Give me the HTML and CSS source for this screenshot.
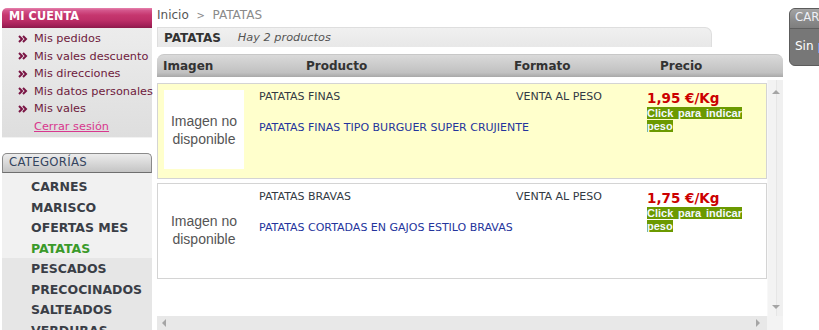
FILE: index.html
```html
<!DOCTYPE html>
<html lang="es">
<head>
<meta charset="utf-8">
<title>PATATAS</title>
<link rel="stylesheet" href="styles.css">
</head>
<body>
<div class="page">
  <aside class="sidebar">
    <section class="account">
      <h2 class="account-title">MI CUENTA</h2>
      <ul class="account-list">
        <li><svg class="chev" width="10" height="8" viewBox="0 0 10 8"><path d="M1 1 L4 4 L1 7 M5 1 L8 4 L5 7" fill="none" stroke="#7a1544" stroke-width="2"/></svg><a href="#">Mis pedidos</a></li>
        <li><svg class="chev" width="10" height="8" viewBox="0 0 10 8"><path d="M1 1 L4 4 L1 7 M5 1 L8 4 L5 7" fill="none" stroke="#7a1544" stroke-width="2"/></svg><a href="#">Mis vales descuento</a></li>
        <li><svg class="chev" width="10" height="8" viewBox="0 0 10 8"><path d="M1 1 L4 4 L1 7 M5 1 L8 4 L5 7" fill="none" stroke="#7a1544" stroke-width="2"/></svg><a href="#">Mis direcciones</a></li>
        <li><svg class="chev" width="10" height="8" viewBox="0 0 10 8"><path d="M1 1 L4 4 L1 7 M5 1 L8 4 L5 7" fill="none" stroke="#7a1544" stroke-width="2"/></svg><a href="#">Mis datos personales</a></li>
        <li><svg class="chev" width="10" height="8" viewBox="0 0 10 8"><path d="M1 1 L4 4 L1 7 M5 1 L8 4 L5 7" fill="none" stroke="#7a1544" stroke-width="2"/></svg><a href="#">Mis vales</a></li>
        <li class="logout-item"><a class="logout" href="#">Cerrar sesión</a></li>
      </ul>
    </section>
    <section class="cats">
      <h2 class="cats-title">CATEGORÍAS</h2>
      <ul class="cats-list">
        <li>CARNES</li>
        <li>MARISCO</li>
        <li>OFERTAS MES</li>
        <li class="active">PATATAS</li>
        <li>PESCADOS</li>
        <li>PRECOCINADOS</li>
        <li>SALTEADOS</li>
        <li>VERDURAS</li>
      </ul>
    </section>
  </aside>

  <main class="main">
    <div class="crumbs"><span class="crumb-home">Inicio</span>&nbsp; <span class="crumb-sep">&gt;</span>&nbsp; PATATAS</div>
    <div class="titlebar"><strong class="title-name">PATATAS</strong><em class="title-count">Hay 2 productos</em></div>
    <div class="thead">
      <span>Imagen</span><span>Producto</span><span>Formato</span><span>Precio</span>
    </div>
    <div class="scroller">
      <div class="scroll-body">
        <div class="rows">
          <div class="prod prod-hl">
            <div class="img-box">Imagen no disponible</div>
            <div class="prod-info">
              <div class="prod-name">PATATAS FINAS</div>
              <div class="prod-desc">PATATAS FINAS TIPO BURGUER SUPER CRUJIENTE</div>
            </div>
            <div class="prod-format">VENTA AL PESO</div>
            <div class="prod-price">
              <div class="price">1,95 €/Kg</div>
              <div class="weigh"><span>Click para indicar peso</span></div>
            </div>
          </div>
          <div class="prod">
            <div class="img-box">Imagen no disponible</div>
            <div class="prod-info">
              <div class="prod-name">PATATAS BRAVAS</div>
              <div class="prod-desc">PATATAS CORTADAS EN GAJOS ESTILO BRAVAS</div>
            </div>
            <div class="prod-format">VENTA AL PESO</div>
            <div class="prod-price">
              <div class="price">1,75 €/Kg</div>
              <div class="weigh"><span>Click para indicar peso</span></div>
            </div>
          </div>
        </div>
        <div class="vbar"><span class="arr arr-up"></span><span class="arr arr-down"></span></div>
      </div>
      <div class="hbar">
        <div class="htrack"><span class="arr arr-left"></span><span class="arr arr-right"></span></div>
        <div class="corner"></div>
      </div>
    </div>
  </main>

  <aside class="cart">
    <h2 class="cart-title">CARRITO</h2>
    <p class="cart-body">Sin <a href="#">productos</a></p>
  </aside>
</div>
</body>
</html>
```

FILE: styles.css
```css
html, body {
  margin: 0;
  padding: 0;
  overflow: hidden;
  background: #fff;
}
body {
  font-family: "DejaVu Sans", Verdana, sans-serif;
  color: #333;
}
ul { list-style: none; margin: 0; padding: 0; }
h2, p { margin: 0; }
a { text-decoration: none; color: inherit; }

.page {
  display: flex;
  align-items: flex-start;
  padding-left: 2px;
  width: 1000px;
  height: 330px;
}

/* Sidebar */
.sidebar {
  width: 150px;
  flex: none;
  padding-top: 8px;
}
.account-title {
  height: 20px;
  line-height: 21px;
  padding-left: 7px;
  border-radius: 5px 0 0 0;
  background: linear-gradient(#e682ad 0, #d4568c 12%, #c6376f 35%, #be2f68 60%, #a52159 85%, #8c1a4a 100%);
  color: #fff;
  font: bold 12.5px "DejaVu Sans Condensed", "DejaVu Sans", sans-serif;
  letter-spacing: 0.1px;
}
.account-list {
  height: 110px;
  box-sizing: border-box;
  padding-top: 2px;
  background: linear-gradient(#ececec, #dedede);
  border-bottom: 1px solid #f2f2f2;
}
.account-list li {
  display: flex;
  align-items: center;
  height: 17.5px;
  padding-left: 16px;
  font-size: 11.3px;
  color: #6e1a3c;
  white-space: nowrap;
}
.chev { margin-right: 6px; flex: none; }
.logout-item { padding-left: 32px !important; }
.logout {
  color: #d8378e;
  text-decoration: underline;
}

.cats { margin-top: 15px; }
.cats-title {
  height: 20px;
  box-sizing: border-box;
  line-height: 18px;
  padding-left: 6px;
  border: 1px solid #8a8a8a;
  border-bottom-color: #6f6f6f;
  border-radius: 5px 5px 0 0;
  background: linear-gradient(#ececec, #d6d6d6 55%, #c4c4c4);
  color: #34445e;
  font: normal 13px "DejaVu Sans Condensed", "DejaVu Sans", sans-serif;
  letter-spacing: 0.3px;
}
.cats-list {
  padding-top: 4px;
  padding-left: 29px;
  background: linear-gradient(#f1f1f1 0, #f1f1f1 85px, #e6e6e6 85px);
  height: 200px;
}
.cats-list li {
  height: 20.5px;
  line-height: 20.5px;
  font-weight: bold;
  font-size: 12.5px;
  color: #3a3e46;
}
.cats-list li.active { color: #3a9a2a; }

/* Main */
.main {
  width: 626px;
  flex: none;
  margin-left: 5px;
}
.crumbs {
  height: 16px;
  line-height: 16px;
  margin-top: 7px;
  font-size: 12px;
  color: #8a8a8a;
}
.crumb-home { color: #555; }
.crumb-sep { font-size: 10px; }

.titlebar {
  width: 555px;
  height: 20px;
  box-sizing: border-box;
  margin-top: 4px;
  display: flex;
  align-items: center;
  gap: 17px;
  padding-left: 6px;
  background: linear-gradient(#f0f0f0, #e8e8e8);
  border: 1px solid #dedede;
  border-bottom: none;
  border-radius: 0 7px 0 0;
}
.title-name { font-size: 12px; color: #333; }
.title-count { font-size: 11.3px; color: #555; }

.thead {
  margin-top: 7px;
  height: 23px;
  box-sizing: border-box;
  display: grid;
  grid-template-columns: 143px 208px 146px 1fr;
  align-items: center;
  padding-left: 6px;
  background: linear-gradient(#dadada 0, #cdcdcd 40%, #c1c1c1 80%, #a9a9a9 100%);
  border-top: 1px solid #c8c8c8;
  border-radius: 7px 7px 0 0;
  font-weight: bold;
  font-size: 12px;
  color: #333;
}

.scroller { margin-top: 3px; }
.scroll-body {
  display: flex;
  height: 236px;
}
.rows {
  width: 610px;
  flex: none;
  padding-top: 3px;
}
.prod {
  height: 96px;
  box-sizing: border-box;
  margin-bottom: 4px;
  padding: 6px 0 0 6px;
  border: 1px solid #d4d4d4;
  background: #fff;
  display: grid;
  grid-template-columns: 80px 272px 131px 95px;
  align-items: start;
}
.prod-hl { background: #ffffcc; }
.img-box {
  width: 80px;
  height: 79px;
  box-sizing: border-box;
  padding: 0 4px;
  background: #fff;
  display: flex;
  align-items: center;
  justify-content: center;
  text-align: center;
  font: 14px/18px "Liberation Sans", Arial, sans-serif;
  color: #555;
}
.prod-info { padding-left: 15px; }
.prod-name, .prod-format {
  font-size: 11px;
  line-height: 14px;
  color: #333a44;
  white-space: nowrap;
}
.prod-desc {
  margin-top: 17px;
  font-size: 11px;
  line-height: 14px;
  color: #24349c;
  white-space: nowrap;
}
.price {
  height: 17px;
  line-height: 17px;
  font-weight: bold;
  font-size: 13.5px;
  color: #cc0000;
  white-space: nowrap;
}
.weigh {
  width: 95px;
  text-align: justify;
  font: bold 11px/13px "Liberation Sans", Arial, sans-serif;
}
.weigh span {
  background: #6b9900;
  color: #f2f8ff;
}

.vbar {
  width: 16px;
  flex: none;
  box-sizing: border-box;
  background: linear-gradient(90deg, #f3f3f3 0, #f3f3f3 8px, #e6e6e6 8px, #e6e6e6 9px, #f0f0f0 9px);
  border-left: 1px solid #f8f8f8;
  display: flex;
  flex-direction: column;
  justify-content: space-between;
  align-items: center;
  padding: 10px 0 7px;
}
.arr { display: block; width: 0; height: 0; }
.arr-up {
  border-left: 4px solid transparent;
  border-right: 4px solid transparent;
  border-bottom: 4px solid #a5a5a5;
}
.arr-down {
  border-left: 4px solid transparent;
  border-right: 4px solid transparent;
  border-top: 4px solid #a5a5a5;
}
.hbar {
  display: flex;
  height: 17px;
}
.htrack {
  width: 610px;
  flex: none;
  box-sizing: border-box;
  background: #e8e8e8;
  display: flex;
  justify-content: space-between;
  align-items: flex-start;
  padding: 3px 7px 0 5px;
}
.arr-left {
  border-top: 4px solid transparent;
  border-bottom: 4px solid transparent;
  border-right: 4px solid #a5a5a5;
}
.arr-right {
  border-top: 4px solid transparent;
  border-bottom: 4px solid transparent;
  border-left: 4px solid #a5a5a5;
}
.corner { flex: 1; background: #f3f3f3; }

/* Cart */
.cart {
  width: 150px;
  flex: none;
  margin-left: 6px;
  margin-top: 8px;
  height: 58px;
  box-sizing: border-box;
  border: 1px solid #5c5c5c;
  border-radius: 6px;
  background: #777;
  overflow: hidden;
}
.cart-title {
  height: 20px;
  box-sizing: border-box;
  line-height: 19px;
  padding-left: 5px;
  background: linear-gradient(#a4a4a4, #8a8a8a 60%, #7e7e7e);
  border-bottom: 1px solid #5e5e5e;
  color: #eef0f6;
  font: normal 13px "DejaVu Sans Condensed", "DejaVu Sans", sans-serif;
}
.cart-body {
  padding: 10px 0 0 5px;
  font: 12px "DejaVu Sans", sans-serif;
  color: #fff;
}
.cart-body a { color: #66b8ff; }
```
